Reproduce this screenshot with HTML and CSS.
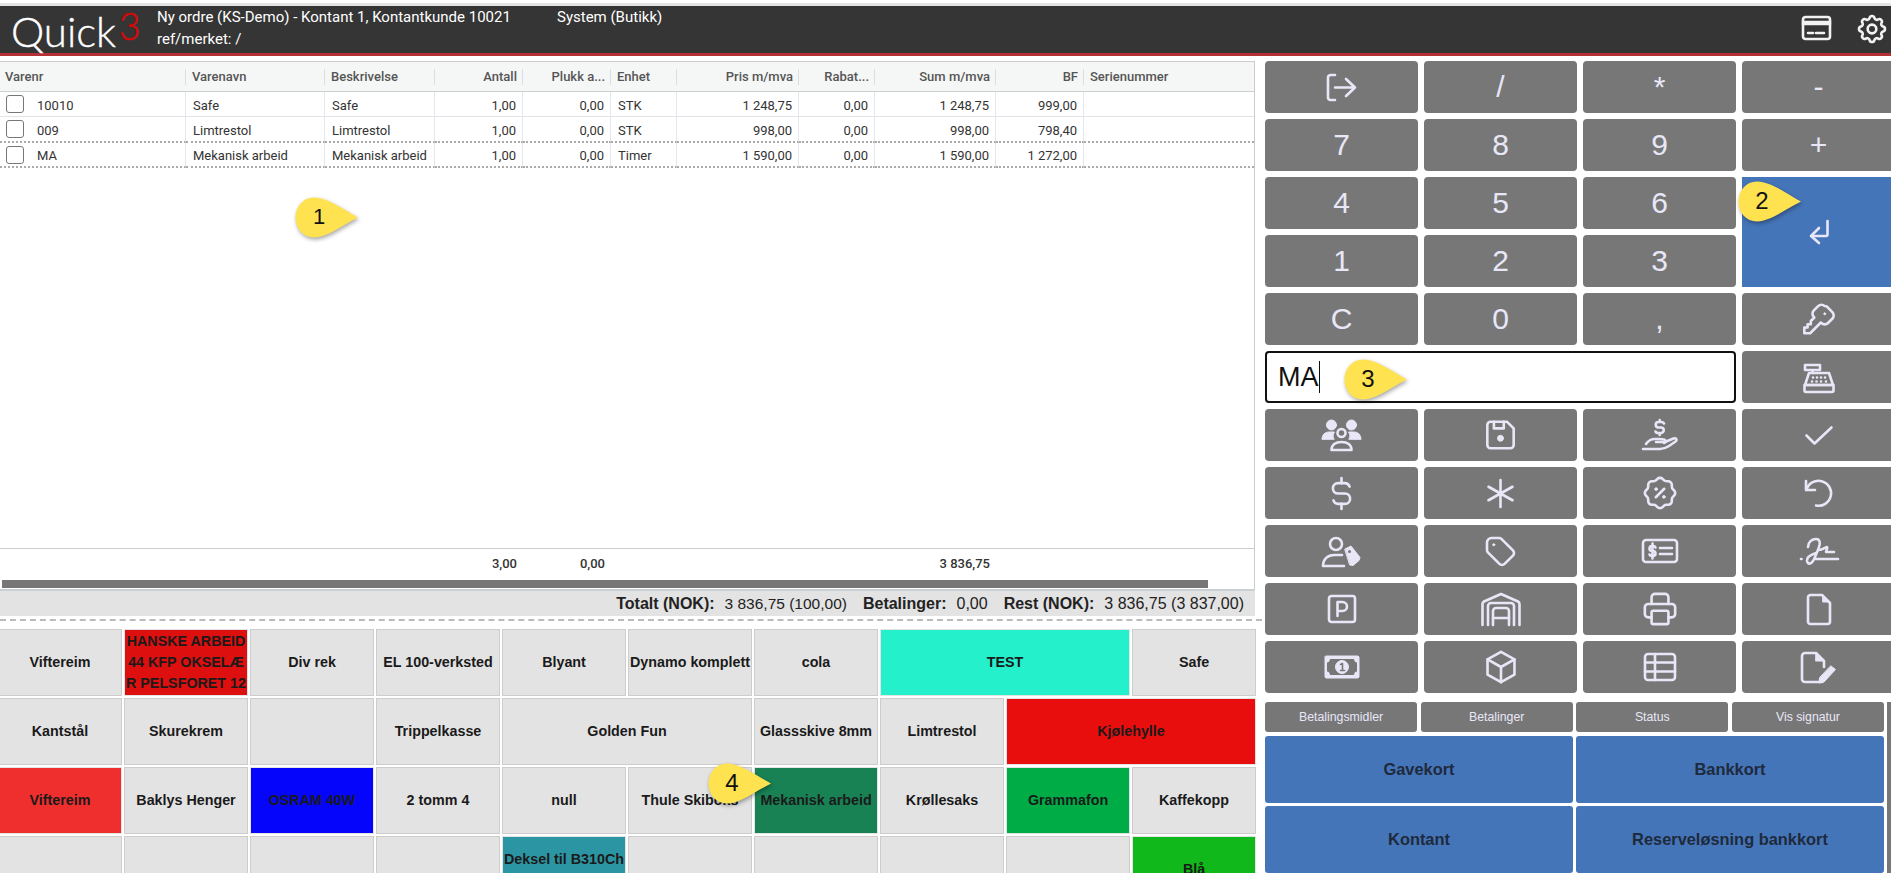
FILE: index.html
```html
<!DOCTYPE html>
<html lang="no">
<head>
<meta charset="utf-8">
<title>Quick3</title>
<link rel="stylesheet" href="styles.css">
</head>
<body>
<div class="topline"></div>
<header class="appbar">
  <div class="logo"><span class="logo-word">Quick</span><span class="logo-sup">3</span></div>
  <div class="order-info">
    <div>Ny ordre (KS-Demo) - Kontant 1, Kontantkunde 10021</div>
    <div>ref/merket: /</div>
  </div>
  <div class="order-user">System (Butikk)</div>
  <div class="bar-icons">
    <svg class="ic" width="29" height="24" viewBox="0 0 29 24"><rect x="1" y="1" width="27" height="22" rx="2.5"/><path d="M1 6h27M1 8h27"/><path d="M6 17h5M14 17h8"/></svg>
    <svg class="ic" width="26" height="26" viewBox="3 3 18 18"><path d="M10.325 4.317c.426 -1.756 2.924 -1.756 3.35 0a1.724 1.724 0 0 0 2.573 1.066c1.543 -.94 3.31 .826 2.37 2.37a1.724 1.724 0 0 0 1.065 2.572c1.756 .426 1.756 2.924 0 3.35a1.724 1.724 0 0 0 -1.066 2.573c.94 1.543 -.826 3.31 -2.37 2.37a1.724 1.724 0 0 0 -2.572 1.065c-.426 1.756 -2.924 1.756 -3.35 0a1.724 1.724 0 0 0 -2.573 -1.066c-1.543 .94 -3.31 -.826 -2.37 -2.37a1.724 1.724 0 0 0 -1.065 -2.572c-1.756 -.426 -1.756 -2.924 0 -3.35a1.724 1.724 0 0 0 1.066 -2.573c-.94 -1.543 .826 -3.31 2.37 -2.37c1 .608 2.296 .07 2.572 -1.065z"/><circle cx="12" cy="12" r="3"/></svg>
  </div>
</header>

<main class="workspace">
  <section class="left">
    <div class="lines">
      <table class="grid">
        <colgroup><col class="c1"><col class="c2"><col class="c3"><col class="c4"><col class="c5"><col class="c6"><col class="c7"><col class="c8"><col class="c9"><col class="c10"><col class="c11"></colgroup>
        <thead>
          <tr><th>Varenr</th><th>Varenavn</th><th>Beskrivelse</th><th class="r">Antall</th><th class="r">Plukk a...</th><th>Enhet</th><th class="r">Pris m/mva</th><th class="r">Rabat...</th><th class="r">Sum m/mva</th><th class="r">BF</th><th class="last">Serienummer</th></tr>
        </thead>
        <tbody>
          <tr><td><span class="first"><span class="chk"></span>10010</span></td><td>Safe</td><td>Safe</td><td class="r">1,00</td><td class="r">0,00</td><td>STK</td><td class="r">1 248,75</td><td class="r">0,00</td><td class="r">1 248,75</td><td class="r">999,00</td><td></td></tr>
          <tr><td><span class="first"><span class="chk"></span>009</span></td><td>Limtrestol</td><td>Limtrestol</td><td class="r">1,00</td><td class="r">0,00</td><td>STK</td><td class="r">998,00</td><td class="r">0,00</td><td class="r">998,00</td><td class="r">798,40</td><td></td></tr>
          <tr class="current"><td><span class="first"><span class="chk"></span>MA</span></td><td>Mekanisk arbeid</td><td>Mekanisk arbeid</td><td class="r">1,00</td><td class="r">0,00</td><td>Timer</td><td class="r">1 590,00</td><td class="r">0,00</td><td class="r">1 590,00</td><td class="r">1 272,00</td><td></td></tr>
        </tbody>
      </table>
      <div class="spacer"></div>
      <table class="grid foot">
        <colgroup><col class="c1"><col class="c2"><col class="c3"><col class="c4"><col class="c5"><col class="c6"><col class="c7"><col class="c8"><col class="c9"><col class="c10"><col class="c11"></colgroup>
        <tbody><tr><td></td><td></td><td></td><td class="r">3,00</td><td class="r">0,00</td><td></td><td></td><td></td><td class="r">3 836,75</td><td></td><td></td></tr></tbody>
      </table>
      <div class="hscroll"></div>
    </div>
    <div class="summary">
      <b>Totalt (NOK):</b><span class="narrow">3 836,75 (100,00)</span>
      <b>Betalinger:</b><span>0,00</span>
      <b>Rest (NOK):</b><span>3 836,75 (3 837,00)</span>
    </div>
    <div class="dash"></div>
    <div class="tiles">
      <div class="tile">Viftereim</div>
      <div class="tile red1">HANSKE ARBEID<br>44 KFP OKSELÆ<br>R PELSFORET 12</div>
      <div class="tile">Div rek</div>
      <div class="tile">EL 100-verksted</div>
      <div class="tile">Blyant</div>
      <div class="tile">Dynamo komplett</div>
      <div class="tile">cola</div>
      <div class="tile wide turq">TEST</div>
      <div class="tile">Safe</div>

      <div class="tile">Kantstål</div>
      <div class="tile">Skurekrem</div>
      <div class="tile"></div>
      <div class="tile">Trippelkasse</div>
      <div class="tile wide">Golden Fun</div>
      <div class="tile">Glassskive 8mm</div>
      <div class="tile">Limtrestol</div>
      <div class="tile wide red2">Kjølehylle</div>

      <div class="tile red3">Viftereim</div>
      <div class="tile">Baklys Henger</div>
      <div class="tile blue">OSRAM 40W</div>
      <div class="tile">2 tomm 4</div>
      <div class="tile">null</div>
      <div class="tile">Thule Skiboks</div>
      <div class="tile dgreen">Mekanisk arbeid</div>
      <div class="tile">Krøllesaks</div>
      <div class="tile green">Grammafon</div>
      <div class="tile">Kaffekopp</div>

      <div class="tile"></div>
      <div class="tile"></div>
      <div class="tile"></div>
      <div class="tile"></div>
      <div class="tile teal">Deksel til B310Ch<br>&nbsp;</div>
      <div class="tile"></div>
      <div class="tile"></div>
      <div class="tile"></div>
      <div class="tile"></div>
      <div class="tile lime">Blå</div>
    </div>
  </section>

  <section class="right">
    <div class="keys">
      <div class="key"><svg class="ic" width="31" height="27" viewBox="0 0 31 27"><path d="M9 1H4.5A2.5 2.5 0 0 0 2 3.500v20A2.500 2.500 0 0 0 4.500 26H9"/><path d="M9 13.500h20M20 5l9 8.500L20 22"/></svg></div>
      <div class="key">/</div>
      <div class="key">*</div>
      <div class="key">-</div>
      <div class="key">7</div>
      <div class="key">8</div>
      <div class="key">9</div>
      <div class="key">+</div>
      <div class="key">4</div>
      <div class="key">5</div>
      <div class="key">6</div>
      <div class="key enter"><svg class="ic" width="20" height="24" viewBox="0 0 20 24"><path d="M18.500 1v13.500a1.500 1.500 0 0 1-1.500 1.500H3"/><path d="M10 8l-8 8 8 7"/></svg></div>
      <div class="key">1</div>
      <div class="key">2</div>
      <div class="key">3</div>
      <div class="key">C</div>
      <div class="key">0</div>
      <div class="key">,</div>
      <div class="key"><svg class="ic" width="32" height="31" viewBox="2.500 2.500 19 19"><path d="M16.555 3.843l3.602 3.602a2.877 2.877 0 0 1 0 4.069l-2.643 2.643a2.877 2.877 0 0 1 -4.069 0l-.301 -.301l-6.558 6.558h-3.586v-3.500h2v-2h2v-2l2.144 -2.144l-.301 -.301a2.877 2.877 0 0 1 0 -4.069l2.643 -2.643a2.877 2.877 0 0 1 4.069 0z"/><circle class="solid" cx="15.500" cy="8.500" r=".6"/></svg></div>
      <div class="entry"><span class="entry-text">MA</span></div>
      <div class="key"><svg class="ic" width="32" height="31" viewBox="0 0 32 31"><path d="M2 3h15v5H2zM9.500 8v3"/><path d="M6 11h20l4 12H2z"/><path d="M1.500 23h29v5.500a1.500 1.500 0 0 1-1.500 1.500H3a1.500 1.500 0 0 1-1.500-1.500z"/><path class="dots" d="M10 15.500h.01M14 15.500h.01M18 15.500h.01M22 15.500h.01M9 19.500h.01M13.500 19.500h.01M18 19.500h.01M23 19.500h.01"/></svg></div>

      <div class="key"><svg class="ic" width="39" height="32" viewBox="0 0 39 32"><circle class="solid" cx="9.500" cy="6" r="5"/><circle class="solid" cx="29.500" cy="6" r="5"/><path class="solid" d="M0 20c0-4 3-7 7-7h5.500c-1.500 2-2 5-.5 7zM39 20c0-4-3-7-7-7h-5.500c1.500 2 2 5 .5 7z"/><circle cx="19.500" cy="14" r="4"/><path d="M9.500 31c0-5 4-8 10-8s10 3 10 8z"/></svg></div>
      <div class="key"><svg class="ic" width="29" height="28" viewBox="3.500 3.500 17 17"><path d="M6 4h10l4 4v10a2 2 0 0 1 -2 2h-12a2 2 0 0 1 -2 -2v-12a2 2 0 0 1 2 -2"/><circle class="solid" cx="12" cy="14" r="1.800"/><path d="M14 4v4h-6v-4"/></svg></div>
      <div class="key"><svg class="ic" width="36" height="31" viewBox="0 0 36 31"><path d="M22 3.500a3 3 0 0 0-3-1.500h-2.500a2.700 2.700 0 0 0 0 5.500h2.500a2.700 2.700 0 0 1 0 5.500h-2.500a3 3 0 0 1-3-1.500M17.700 0v2M17.700 13v2"/><path d="M1 29h17c4 0 6-1 9-3l6.500-4.500c2-1.500.5-4-2-3L23 22H14"/><path d="M4 24c2-3 5-5 9-5h4l5 .5c2 .5 2 3 0 3.500"/></svg></div>
      <div class="key"><svg class="ic" width="28" height="19" viewBox="0 0 28 19"><path d="M1.500 9.500l8 8L26.500 1.500"/></svg></div>

      <div class="key"><svg class="ic" width="31" height="31" viewBox="3 3 18 18"><path d="M16.700 8a3 3 0 0 0 -2.700 -2h-4a3 3 0 0 0 0 6h4a3 3 0 0 1 0 6h-4a3 3 0 0 1 -2.700 -2"/><path d="M12 3v3m0 12v3"/></svg></div>
      <div class="key"><svg class="ic" width="27" height="27" viewBox="3 3 18 18"><path d="M12 3v18M4 7.500l16 9M20 7.500l-16 9"/></svg></div>
      <div class="key"><svg class="ic" width="32" height="32" viewBox="2.500 2.500 19 19"><path d="M5 7.200a2.200 2.200 0 0 1 2.200 -2.200h1a2.200 2.200 0 0 0 1.550 -.64l.7 -.7a2.200 2.200 0 0 1 3.120 0l.7 .7c.412 .41 .97 .64 1.550 .64h1a2.200 2.200 0 0 1 2.200 2.200v1c0 .58 .23 1.138 .64 1.550l.7 .7a2.200 2.200 0 0 1 0 3.120l-.7 .7a2.200 2.200 0 0 0 -.64 1.550v1a2.200 2.200 0 0 1 -2.200 2.200h-1a2.200 2.200 0 0 0 -1.550 .64l-.7 .7a2.200 2.200 0 0 1 -3.120 0l-.7 -.7a2.200 2.200 0 0 0 -1.550 -.64h-1a2.200 2.200 0 0 1 -2.200 -2.200v-1a2.200 2.200 0 0 0 -.64 -1.550l-.7 -.7a2.200 2.200 0 0 1 0 -3.120l.7 -.7a2.200 2.200 0 0 0 .64 -1.550v-1"/><path d="M9.500 14.500l5-5"/><circle class="solid" cx="9.700" cy="9.700" r=".8"/><circle class="solid" cx="14.300" cy="14.300" r=".8"/></svg></div>
      <div class="key"><svg class="ic" width="29" height="28" viewBox="0 0 29 28"><path d="M2 2v9h9"/><path d="M2.500 11A12.500 12.500 0 1 1 12 26.500"/></svg></div>

      <div class="key"><svg class="ic" width="39" height="31" viewBox="0 0 39 31"><circle cx="14" cy="8" r="6"/><path d="M1 30c0-7 5-11 11-11h8M1 30h21"/><path class="solid" d="M23 13l6-3 9 11.500-1 3-6 5-3-.5z"/><circle class="hole" cx="27.500" cy="15.500" r="1.500"/></svg></div>
      <div class="key"><svg class="ic" width="27" height="27" viewBox="3 3 18 18"><path d="M3 6v5.172a2 2 0 0 0 .586 1.414l7.710 7.710a2.410 2.410 0 0 0 3.408 0l5.592 -5.592a2.410 2.410 0 0 0 0 -3.408l-7.710 -7.710a2 2 0 0 0 -1.414 -.586h-5.172a3 3 0 0 0 -3 3z"/><circle class="solid" cx="7.500" cy="7.500" r=".7"/></svg></div>
      <div class="key"><svg class="ic" width="36" height="24" viewBox="0 0 36 24"><rect x="1" y="1" width="34" height="22" rx="3"/><path d="M13.500 8.500a2.500 2.500 0 0 0-2.500-1.500h-1a2.400 2.400 0 0 0 0 5h1a2.400 2.400 0 0 1 0 5h-1a2.500 2.500 0 0 1-2.500-1.500M10.500 4.500v15"/><path d="M18 9h12M18 15h12"/></svg></div>
      <div class="key"><svg class="ic" width="39" height="27" viewBox="0 0 39 27"><path d="M2 21h.5"/><path d="M9 9c0-5 4-8 8-8s4.500 4 3 8-4 11-6 14-5 4-6 0c-.500-3 3-6 9-8"/><path d="M20 12c3 0 7-3 8-3 .500 0 0 2-1 5h8"/><path d="M17 21h22"/></svg></div>

      <div class="key"><svg class="ic" width="28" height="28" viewBox="0 0 28 28"><rect x="1" y="1" width="26" height="26" rx="2.500"/><path d="M9.500 21V7h5a4.500 4.500 0 0 1 0 9h-5"/></svg></div>
      <div class="key"><svg class="ic" width="40" height="32" viewBox="0 0 40 32"><path d="M1.500 32V11a3 3 0 0 1 1.500-2.500L20 1l17 7.500A3 3 0 0 1 38.500 11v21"/><path d="M7 32V13a3 3 0 0 1 3-3h20a3 3 0 0 1 3 3v19"/><path d="M12 32V18a3 3 0 0 1 3-3h10a3 3 0 0 1 3 3v14"/><path d="M12 25h16"/></svg></div>
      <div class="key"><svg class="ic" width="32" height="32" viewBox="2.500 2.500 19 19"><path d="M17 17h2a2 2 0 0 0 2 -2v-4a2 2 0 0 0 -2 -2h-14a2 2 0 0 0 -2 2v4a2 2 0 0 0 2 2h2"/><path d="M17 9v-4a2 2 0 0 0 -2 -2h-6a2 2 0 0 0 -2 2v4"/><rect x="7" y="13" width="10" height="8" rx="1"/></svg></div>
      <div class="key"><svg class="ic" width="24" height="31" viewBox="0 0 24 31"><path d="M3.500 1H15l8 8v18.500a2.500 2.500 0 0 1-2.500 2.500h-17A2.500 2.500 0 0 1 1 27.500v-24A2.500 2.500 0 0 1 3.500 1z"/><path class="solid" d="M16 2l6 6h-6z"/></svg></div>

      <div class="key"><svg class="ic" width="36" height="24" viewBox="0 0 36 24"><path class="solid" d="M2 1h32l1 1v20l-1 1H2l-1-1V2z"/><path class="hole" d="M6 4h24c0 2 1.500 3.500 3 3.500v9c-1.500 0-3 1.500-3 3.500H6c0-2-1.500-3.500-3-3.500v-9c1.500 0 3-1.500 3-3.500z"/><circle class="solid" cx="18" cy="12" r="6.500"/><path class="cut" d="M16.500 9.500l2-1v7M16.500 15.500h4"/></svg></div>
      <div class="key"><svg class="ic" width="32" height="32" viewBox="3 2.500 18 19"><path d="M12 3l8 4.500v9l-8 4.500l-8 -4.500v-9l8 -4.500"/><path d="M12 12l8 -4.500M12 12v9M12 12l-8 -4.500"/></svg></div>
      <div class="key"><svg class="ic" width="32" height="28" viewBox="0 0 32 28"><rect x="1" y="1" width="30" height="26" rx="3"/><path d="M1 9.500h30M1 18.500h30M11 1v26"/></svg></div>
      <div class="key"><svg class="ic" width="35" height="31" viewBox="0 0 35 31"><path d="M21 30H4a3 3 0 0 1-3-3V4a3 3 0 0 1 3-3h11l8 8v6"/><path class="solid" d="M15 2l7 7h-7z"/><path class="solid" d="M30 14l4.500 3.500L23 30l-5 1 .500-5z"/></svg></div>
    </div>

    <div class="pay">
      <div class="pay-main">
        <div class="tabs">
          <div class="tab">Betalingsmidler</div>
          <div class="tab">Betalinger</div>
          <div class="tab">Status</div>
          <div class="tab">Vis signatur</div>
        </div>
        <div class="methods">
          <div class="method">Gavekort</div>
          <div class="method">Bankkort</div>
          <div class="method">Kontant</div>
          <div class="method">Reserveløsning bankkort</div>
        </div>
      </div>
      <div class="sliver"></div>
    </div>
  </section>
</main>

<div class="marker m1"><svg viewBox="0 0 64 41"><path d="M19 .500C32 .500 46 11 63 20.500 46 29 32 40.500 19 40.500 8 40.500 .500 31.500 .500 20.500S8 .500 19 .500z"/></svg><span>1</span></div>
<div class="marker m2"><svg viewBox="0 0 64 41"><path d="M19 .500C32 .500 46 11 63 20.500 46 29 32 40.500 19 40.500 8 40.500 .500 31.500 .500 20.500S8 .500 19 .500z"/></svg><span>2</span></div>
<div class="marker m3"><svg viewBox="0 0 64 41"><path d="M19 .500C32 .500 46 11 63 20.500 46 29 32 40.500 19 40.500 8 40.500 .500 31.500 .500 20.500S8 .500 19 .500z"/></svg><span>3</span></div>
<div class="marker m4"><svg viewBox="0 0 64 41"><path d="M19 .500C32 .500 46 11 63 20.500 46 29 32 40.500 19 40.500 8 40.500 .500 31.500 .500 20.500S8 .500 19 .500z"/></svg><span>4</span></div>
</body>
</html>
```

FILE: styles.css
```css
* { box-sizing: border-box; }
html, body { margin: 0; padding: 0; }
body {
  width: 1891px;
  height: 873px;
  overflow: hidden;
  position: relative;
  background: #fff;
  font-family: "Liberation Sans", Arial, sans-serif;
  color: #222;
}

/* Top bar */
.topline { height: 6px; border-top: 3px solid #fff; background: #e3e3e3; }
.appbar {
  height: 50px;
  background: #353535;
  border-bottom: 3px solid #b43034;
  display: flex;
  color: #fff;
  font-family: Roboto, sans-serif;
  font-size: 15px;
  line-height: 22px;
}
.logo {
  width: 157px;
  padding-left: 11px;
  display: flex;
  flex: none;
  font-family: Lato, sans-serif;
  font-weight: 300;
}
.logo-word { font-size: 42px; line-height: 44px; padding-top: 3px; -webkit-text-stroke: .4px #fff; }
.logo-sup { font-size: 37px; line-height: 38px; color: #d40a0a; padding-left: 3px; padding-top: 1px; -webkit-text-stroke: .6px #d40a0a; }
.order-info { width: 400px; flex: none; }
.order-user { flex: 1; }
.bar-icons {
  display: flex;
  gap: 28px;
  padding: 10px 6px 0 0;
  align-items: flex-start;
}
.bar-icons .ic { stroke: #f2f2f2; }

/* Icons */
.ic { fill: none; stroke: #e9e7f7; stroke-width: 2.6px; stroke-linecap: round; stroke-linejoin: round; overflow: visible; display: block; }
.ic * { vector-effect: non-scaling-stroke; }
.ic .solid { fill: #e9e7f7; stroke-width: 1px; }
.ic .hole { fill: #777; stroke: none; }
.ic .cut { stroke: #777; fill: none; stroke-width: 1.6px; }
.ic .dots { stroke-width: 2.6px; }

/* Layout */
.workspace { display: flex; gap: 10px; padding-top: 5px; align-items: flex-start; }
.left { width: 1255px; flex: none; }
.right { width: 630px; flex: none; }

/* Line grid */
.lines {
  height: 528px;
  border: 1px solid #ccc;
  border-left: 0;
  border-bottom: 0;
  padding-bottom: 1px;
  display: flex;
  flex-direction: column;
}
.grid {
  width: 1254px;
  table-layout: fixed;
  border-collapse: separate;
  border-spacing: 0;
  font-family: Roboto, sans-serif;
  font-size: 13px;
  color: #333;
  flex: none;
}
.c1 { width: 186px; } .c2 { width: 139px; } .c3 { width: 110px; } .c4 { width: 88px; }
.c5 { width: 88px; } .c6 { width: 66px; } .c7 { width: 122px; } .c8 { width: 76px; }
.c9 { width: 121px; } .c10 { width: 88px; } .c11 { width: 170px; }
.grid th {
  height: 30px;
  padding: 0 6px 0 6px;
  text-align: left;
  font-weight: 500;
  color: #555;
  white-space: nowrap;
  overflow: hidden;
  background: #f5f7f7 linear-gradient(#dcdfe0, #dcdfe0) right 7px / 1px 16px no-repeat;
  border-bottom: 1px solid #ccd0d2;
}
.grid th:first-child { padding-left: 5px; }
.grid th.last { background-image: none; }
.grid td {
  padding: 2px 6px 0 7px;
  white-space: nowrap;
  overflow: hidden;
  border-right: 1px solid #e4e8ec;
}
.grid td:last-child { border-right: 0; }
.lines > .grid tbody tr td { height: 25px; border-bottom: 1px solid #e0e4e8; }
.lines > .grid tbody tr:nth-child(2) td { height: 26px; border-bottom: 2px dotted #aaa; }
.lines > .grid tbody tr.current td { height: 25px; border-bottom: 2px dotted #aaa; }
.grid .r { text-align: right; }
.first { display: flex; align-items: center; gap: 13px; margin-left: -1px; }
.chk {
  width: 18px;
  height: 18px;
  border: 1px solid #777;
  border-radius: 3px;
  background: #fff;
  flex: none;
  transform: translateY(-1px);
}
.spacer { flex: 1; }
.lines > .grid.foot tbody tr td {
  height: 32px;
  padding: 0 6px 3px 7px;
  border: 0;
  border-top: 1px solid #ccc;
  font-weight: 500;
  color: #333;
}
.hscroll { height: 8px; width: 1206px; margin-left: 2px; background: #777; flex: none; }

/* Summary */
.summary {
  height: 27px;
  border-top: 2px solid #c9d0d4;
  background: #e3e3e3;
  display: flex;
  justify-content: flex-end;
  align-items: center;
  padding-right: 11px;
  font-size: 16px;
  color: #222;
  white-space: nowrap;
}
.summary b { margin-left: 16px; margin-right: 10px; }
.summary .narrow { font-size: 15.500px; }
.dash { height: 2px; margin-top: 3px; margin-bottom: 8px; border-top: 2px dashed #bbb; width: 1262px; }

/* Tiles */
.tiles {
  display: grid;
  grid-template-columns: repeat(10, 124px);
  grid-auto-rows: 67px;
  gap: 2px;
  margin-left: -2px;
}
.tile {
  background: #e3e3e3;
  border: 1px solid #cdcdcd;
  display: flex;
  align-items: center;
  justify-content: center;
  text-align: center;
  font-weight: 700;
  font-size: 14.300px;
  line-height: 21px;
  color: #1a1a1a;
  white-space: nowrap;
  overflow: hidden;
}
.tile.wide { grid-column: span 2; }
.red1 { background: #dd0f0f; border-color: #e3e3e3; }
.red2 { background: #e90e0e; border-color: #e3e3e3; }
.red3 { background: #ef2e2e; border-color: #e3e3e3; }
.turq { background: #24f0cb; border-color: #e3e3e3; }
.blue { background: #0505fb; border-color: #e3e3e3; }
.dgreen { background: #198255; border-color: #e3e3e3; }
.green { background: #00ac45; border-color: #e3e3e3; }
.teal { background: #2c95a3; border-color: #e3e3e3; }
.lime { background: #11b81b; border-color: #e3e3e3; }

/* Keypad */
.keys {
  display: grid;
  grid-template-columns: repeat(4, 153px);
  grid-auto-rows: 52px;
  gap: 6px;
}
.key {
  background: #777;
  border-radius: 4px;
  color: #e9e7f7;
  font-size: 30px;
  display: flex;
  align-items: center;
  justify-content: center;
}
.enter { grid-row: span 2; background: #4575b9; border-radius: 0; }
.entry {
  grid-column: span 3;
  border: 2px solid #111;
  border-radius: 4px;
  background: #fff;
  display: flex;
  align-items: center;
  padding-left: 11px;
  font-size: 27px;
  color: #111;
}
.entry-text { border-right: 1px solid #111; line-height: 32px; }

/* Payment */
.pay { display: flex; gap: 3px; margin-top: 9px; }
.pay-main { width: 619px; flex: none; }
.sliver { width: 20px; background: #777; height: 180px; }
.tabs { display: grid; grid-template-columns: repeat(4, 1fr); gap: 3.500px; height: 30px; }
.tab {
  background: #777;
  border-radius: 3px;
  color: #e9e7f7;
  font-size: 12.300px;
  display: flex;
  align-items: center;
  justify-content: center;
}
.methods { display: grid; grid-template-columns: 1fr 1fr; grid-auto-rows: 67px; gap: 3px; margin-top: 4px; }
.method {
  background: #4575b9;
  border-radius: 3px;
  color: #1e2a3c;
  font-weight: 700;
  font-size: 16.400px;
  display: flex;
  align-items: center;
  justify-content: center;
}

/* Callout markers */
.marker { position: absolute; width: 64px; height: 41px; }
.marker svg { display: block; width: 64px; height: 41px; fill: #ffe24f; overflow: visible; filter: drop-shadow(1px 2px 2px rgba(0,0,0,.35)); }
.marker span {
  position: absolute;
  left: 0;
  top: 0;
  width: 48px;
  height: 41px;
  line-height: 39px;
  text-align: center;
  font-size: 24px;
  color: #111;
}
.m1 span { font-size: 22px; }
.m1 { left: 295px; top: 197px; }
.m2 { left: 1738px; top: 181px; }
.m3 { left: 1344px; top: 359px; }
.m4 { left: 708px; top: 763px; }
```
